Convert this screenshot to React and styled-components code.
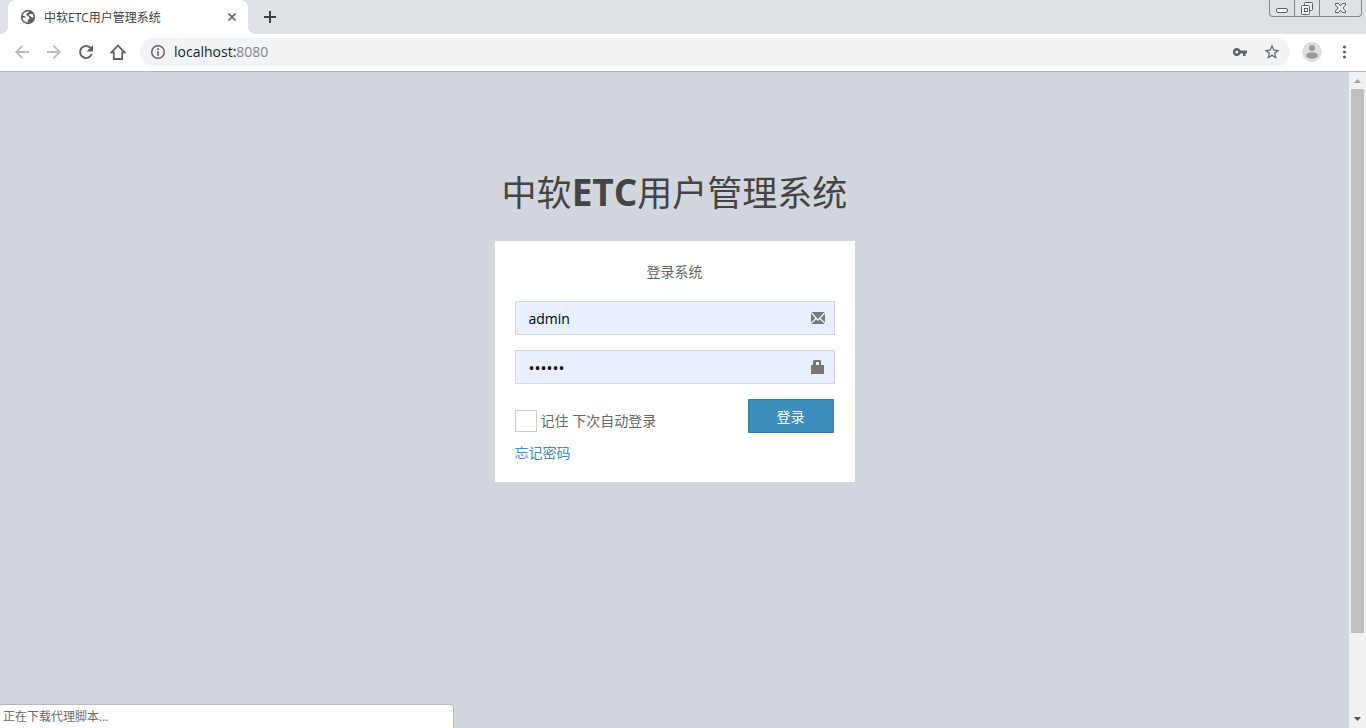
import React from "react";
import styled, { createGlobalStyle } from "styled-components";

const GlobalStyle = createGlobalStyle`
  * { box-sizing: border-box; }
  html, body { margin: 0; padding: 0; overflow: hidden; }
  body, button, input {
    font-family: "Open Sans", "Noto Sans CJK SC", sans-serif;
    font-size: 14px;
    line-height: 20px;
  }
`;

const Browser = styled.div`
  display: flex;
  flex-direction: column;
  height: 100vh;
  background: #d2d6de;
`;

const TabStrip = styled.header`
  display: flex;
  align-items: flex-start;
  height: 34px;
  padding: 0 4px 0 8px;
  background: #dee1e6;
`;

const Tab = styled.div`
  position: relative;
  display: flex;
  align-items: center;
  gap: 8px;
  width: 240px;
  height: 34px;
  padding: 0 8px 0 12px;
  background: #fff;
  border-radius: 8px 8px 0 0;
  color: #3c4043;
  font-size: 12px;

  &::before, &::after {
    content: "";
    position: absolute;
    bottom: 0;
    width: 8px;
    height: 8px;
  }
  &::before {
    right: 100%;
    background: radial-gradient(circle at 0 0, #dee1e6 8px, #fff 8px);
  }
  &::after {
    left: 100%;
    background: radial-gradient(circle at 100% 0, #dee1e6 8px, #fff 8px);
  }
`;

const TabTitle = styled.span`
  flex: 1;
  padding-top: 2px;
  white-space: nowrap;
`;

const IconButton = styled.button`
  display: flex;
  align-items: center;
  justify-content: center;
  width: ${(p) => p.$size || 32}px;
  height: ${(p) => p.$size || 32}px;
  padding: 0;
  border: 0;
  background: none;
  color: ${(p) => p.$color || "#5f6368"};
`;

const NewTab = styled(IconButton)`
  margin: 1px 0 0 6px;
  color: #3c4043;
`;

const WindowControls = styled.div`
  display: flex;
  height: 17px;
  margin-left: auto;
  border: 1px solid #85878b;
  border-top: 0;
  border-radius: 0 0 4px 4px;
`;

const WindowButton = styled.button`
  display: flex;
  align-items: center;
  justify-content: center;
  width: ${(p) => p.$width}px;
  padding: 0;
  border: 0;
  background: none;
  color: #5b5e63;

  & + & { border-left: 1px solid #85878b; }
`;

const Toolbar = styled.nav`
  display: flex;
  align-items: center;
  height: 38px;
  padding: 0 6px 1px;
  background: #fff;
  border-bottom: 1px solid #b3b6ba;
`;

const AddressBar = styled.div`
  display: flex;
  flex: 1;
  align-items: center;
  height: 28px;
  margin: 0 6px;
  padding: 0 2px 0 10px;
  background: #f1f3f4;
  border-radius: 14px;
`;

const Address = styled.span`
  flex: 1;
  margin-left: 8px;
  color: #202124;
`;

const Port = styled.span`
  color: #80868b;
`;

const Avatar = styled(IconButton)`
  overflow: hidden;
  margin: 0 6px;
`;

const Viewport = styled.div`
  display: flex;
  flex: 1;
  min-height: 0;
`;

const Page = styled.main`
  flex: 1;
  min-width: 0;
  color: #666;
`;

const LoginBox = styled.section`
  width: 360px;
  max-width: 100%;
  margin: 7% auto 0;
`;

const Logo = styled.h1`
  margin: 0;
  padding: 2px 0 23px;
  color: #444;
  font-size: 35px;
  font-weight: 400;
  line-height: 50px;
  text-align: center;
  white-space: nowrap;
`;

const LogoMark = styled.b`
  font-size: 37px;
  line-height: 1;
`;

const Card = styled.form`
  padding: 20px;
  background: #fff;
`;

const Message = styled.p`
  margin: 0;
  padding: 1px 0 19px;
  text-align: center;
`;

const Field = styled.label`
  display: flex;
  align-items: center;
  height: 34px;
  margin-bottom: 15px;
  padding: 0 9px 0 13px;
  border: 1px solid #d2d6de;
  background: #e8f0fe;
  color: #777;
`;

const TextInput = styled.input`
  flex: 1;
  min-width: 0;
  padding: 2px 0 0;
  border: 0;
  outline: 0;
  background: none;
  color: #000;

  &[type="password"] { font-size: 16px; }
`;

const Actions = styled.div`
  display: flex;
  align-items: flex-start;
  justify-content: space-between;
  height: 44px;
  padding-right: 1px;
`;

const Remember = styled.label`
  display: flex;
  align-items: center;
  gap: 4px;
  margin-top: 11px;
`;

const CheckBox = styled.input`
  appearance: none;
  width: 22px;
  height: 22px;
  margin: 0;
  border: 1px solid #d0cdc8;
  background: #fff;
`;

const SubmitButton = styled.button`
  width: 86px;
  height: 34px;
  padding: 2px 0 0;
  border: 1px solid #367fa9;
  background: #3c8dbc;
  color: #fff;
`;

const ForgotLink = styled.a`
  display: block;
  height: 19px;
  color: #3c8dbc;
  text-decoration: none;
`;

const ScrollBar = styled.div`
  display: flex;
  flex-direction: column;
  align-items: center;
  width: 17px;
  background: #f1f1f1;
`;

const ScrollTrack = styled.div`
  flex: 1;
  width: 13px;
`;

const ScrollThumb = styled.div`
  height: calc(100% * 7 / 8);
  background: #c1c1c1;
`;

const Status = styled.footer`
  position: absolute;
  bottom: 0;
  left: 0;
  width: 454px;
  height: 24px;
  padding: 2px 3px;
  border: 1px solid #b6bac3;
  border-width: 1px 1px 0 0;
  border-radius: 0 4px 0 0;
  background: #fff;
  color: #6b6b6b;
  font-size: 12px;
`;

const Icon = ({ size = 16, box = 16, children }) => (
  <svg width={size} height={size} viewBox={`0 0 ${box} ${box}`} fill="none" aria-hidden="true">
    {children}
  </svg>
);

const ScrollArrow = ({ down }) => (
  <svg width="17" height="17" viewBox="0 0 17 17" aria-hidden="true">
    <path d={down ? "M5 6h7l-3.5 4z" : "M5 11h7L8.500 7z"} fill={down ? "#505050" : "#a3a3a3"} />
  </svg>
);

export default function App() {
  return (
    <Browser>
      <GlobalStyle />
      <TabStrip>
        <Tab>
          <Icon>
            <circle cx="8" cy="8" r="7.200" fill="#5f6368" />
            <path d="M9 2.500 C8.500 4 6.500 4 6.500 5.500 C6.500 7.300 9 6.800 9.500 8.500 C9.800 10 8.200 10.300 8 11.500 L7.500 13.500 A5.600 5.600 0 0 1 2.500 8.500 H6 L5.500 7.500 L2.600 6.500 A5.600 5.600 0 0 1 9 2.500Z" fill="#fff" />
            <path d="M9.500 5 H12.700 A5.600 5.600 0 0 1 13.500 8 C12.500 9 11.500 8.500 11 7.500 L9 6.500Z" fill="#fff" />
          </Icon>
          <TabTitle>中软ETC用户管理系统</TabTitle>
          <IconButton $size={16} aria-label="关闭标签页">
            <Icon><path d="M4.500 4.500l7 7m0-7l-7 7" stroke="currentColor" strokeWidth="1.700" /></Icon>
          </IconButton>
        </Tab>
        <NewTab aria-label="新标签页">
          <Icon><path d="M8 2v12M2 8h12" stroke="currentColor" strokeWidth="2" /></Icon>
        </NewTab>
        <WindowControls>
          <WindowButton $width={24} aria-label="最小化">
            <Icon><rect x="2.500" y="8.500" width="11" height="4" rx="1.500" fill="#fff" stroke="currentColor" /></Icon>
          </WindowButton>
          <WindowButton $width={25} aria-label="还原">
            <Icon>
              <rect x="5.500" y="2.500" width="8" height="8" rx="1" fill="#f4f5f6" stroke="currentColor" />
              <rect x="2.500" y="5.500" width="8" height="9" rx="1" fill="#f4f5f6" stroke="currentColor" />
              <rect x="5.500" y="8.500" width="3" height="3" fill="#fff" stroke="currentColor" />
            </Icon>
          </WindowButton>
          <WindowButton $width={42} aria-label="关闭">
            <Icon>
              <path d="M2.500 3.500h3l2 2.500 2-2.500h3v1.500L10 8l2.500 3v1.500h-3L7.500 10l-2 2.500h-3V11L5 8 2.500 5z" fill="#f4f5f6" stroke="currentColor" />
            </Icon>
          </WindowButton>
        </WindowControls>
      </TabStrip>

      <Toolbar>
        <IconButton $color="#babcbe" aria-label="后退">
          <Icon><path d="M15 8H2.500M8.500 1.700L2.200 8l6.300 6.300" stroke="currentColor" strokeWidth="1.800" /></Icon>
        </IconButton>
        <IconButton $color="#babcbe" aria-label="前进">
          <Icon><path d="M1 8h12.500M7.500 1.700L13.800 8l-6.300 6.300" stroke="currentColor" strokeWidth="1.800" /></Icon>
        </IconButton>
        <IconButton aria-label="重新加载">
          <Icon>
            <path d="M13.700 10a6 6 0 1 1-1.200-6.100" stroke="currentColor" strokeWidth="2" />
            <path d="M15 1v6.500H8.500z" fill="currentColor" />
          </Icon>
        </IconButton>
        <IconButton aria-label="主页">
          <Icon><path d="M1.500 8.300H3.800V15h8.400V8.300h2.300L8 1.500z" stroke="currentColor" strokeWidth="1.800" /></Icon>
        </IconButton>
        <AddressBar>
          <Icon>
            <circle cx="8" cy="8" r="6.300" stroke="#5f6368" strokeWidth="1.500" />
            <path d="M8 4.300v1.700M8 7.200v4.500" stroke="#5f6368" strokeWidth="1.700" />
          </Icon>
          <Address>localhost:<Port>8080</Port></Address>
          <IconButton aria-label="密码">
            <Icon>
              <path d="M8.500 6.500A4 4 0 1 0 8.500 9.500H11V12h2.500V9.500H15v-3zM4.800 9.500a1.500 1.500 0 1 1 0-3 1.500 1.500 0 0 1 0 3z" fill="currentColor" fillRule="evenodd" />
            </Icon>
          </IconButton>
          <IconButton aria-label="收藏">
            <Icon size={18} box={24}>
              <path d="M22 9.240l-7.190-.62L12 2 9.190 8.630 2 9.240l5.460 4.730L5.820 21 12 17.270 18.180 21l-1.630-7.030L22 9.240zM12 15.400l-3.760 2.270 1-4.280-3.320-2.880 4.380-.38L12 6.100l1.710 4.040 4.380.38-3.320 2.880 1 4.280L12 15.400z" fill="currentColor" />
            </Icon>
          </IconButton>
        </AddressBar>
        <Avatar $size={20} aria-label="用户">
          <Icon size={20} box={20}>
            <circle cx="10" cy="10" r="10" fill="#dedede" />
            <circle cx="10" cy="6" r="3" fill="#9b9b9b" />
            <ellipse cx="10" cy="13.500" rx="6" ry="3.300" fill="#9b9b9b" />
          </Icon>
        </Avatar>
        <IconButton aria-label="菜单">
          <Icon>
            <circle cx="8.500" cy="3" r="1.600" fill="currentColor" />
            <circle cx="8.500" cy="8" r="1.600" fill="currentColor" />
            <circle cx="8.500" cy="13" r="1.600" fill="currentColor" />
          </Icon>
        </IconButton>
      </Toolbar>

      <Viewport>
        <Page>
          <LoginBox>
            <Logo>中软<LogoMark>ETC</LogoMark>用户管理系统</Logo>
            <Card onSubmit={(e) => e.preventDefault()}>
              <Message>登录系统</Message>
              <Field>
                <TextInput type="text" defaultValue="admin" aria-label="用户名" />
                <Icon size={14} box={14}>
                  <path d="M0 1h14v12H0z" fill="currentColor" />
                  <path d="M0 1.500L5.500 7.500 7 9l1.500-1.500L14 1.500M0 12.500l5-5M14 12.500l-5-5" stroke="#e8f0fe" strokeWidth="1.400" />
                </Icon>
              </Field>
              <Field>
                <TextInput type="password" defaultValue="123456" aria-label="密码" />
                <Icon size={14} box={14}>
                  <path d="M0 5h2V1l1-1h6l1 1v4h3v9H0zM5 2v3h3V2z" fill="currentColor" fillRule="evenodd" />
                </Icon>
              </Field>
              <Actions>
                <Remember>
                  <CheckBox type="checkbox" />
                  记住 下次自动登录
                </Remember>
                <SubmitButton type="submit">登录</SubmitButton>
              </Actions>
              <ForgotLink href="#">忘记密码</ForgotLink>
            </Card>
          </LoginBox>
        </Page>
        <ScrollBar>
          <ScrollArrow />
          <ScrollTrack><ScrollThumb /></ScrollTrack>
          <ScrollArrow down />
        </ScrollBar>
      </Viewport>
      <Status>正在下载代理脚本...</Status>
    </Browser>
  );
}
